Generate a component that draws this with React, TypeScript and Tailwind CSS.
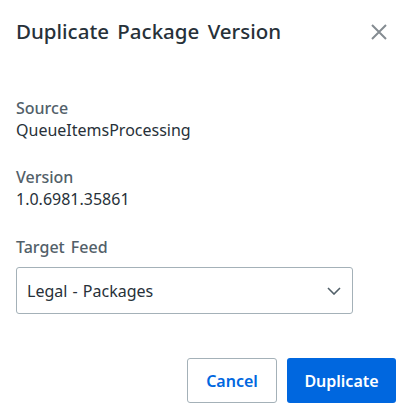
import React from "react";

export default function App() {
  return (
    <div className="w-[400px] h-[417px] bg-white flex flex-col" style={{ fontFamily: '"Noto Sans", sans-serif' }}>
      <div className="flex items-center justify-between pl-4 pr-[13px] pt-[17px] h-[46px]">
        <h1 className="text-[20.5px] font-medium text-[#273139] [word-spacing:3px]">Duplicate Package Version</h1>
        <button className="w-[16px] h-[16px] flex items-center justify-center">
          <svg width="16" height="16" viewBox="0 0 16 16" fill="none" stroke="#858c92" strokeWidth="2">
            <path d="M1 1L15 15M15 1L1 15" />
          </svg>
        </button>
      </div>
      <div className="flex flex-col px-4 pt-[51px]">
        <div className="text-[16px] leading-[22px] text-[#526069] font-medium">Source</div>
        <div className="text-[16px] leading-[22px] text-[#273139]">QueueItemsProcessing</div>
        <div className="text-[16px] leading-[22px] text-[#526069] font-medium mt-[25px]">Version</div>
        <div className="text-[16px] leading-[22px] text-[#273139]">1.0.6981.35861</div>
        <div className="text-[16px] leading-[22px] text-[#526069] font-medium mt-[26px] [word-spacing:2px]">Target Feed</div>
        <div className="mt-[9px] w-[337px] h-[47px] border border-[#a4b1b8] rounded-[3px] flex items-center justify-between pl-[10px] pr-[11px]">
          <span className="text-[16px] text-[#273139] [word-spacing:1px]">Legal - Packages</span>
          <svg width="14" height="8" viewBox="0 0 14 8" fill="none" stroke="#526069" strokeWidth="1.6">
            <path d="M1 1L7 7L13 1" />
          </svg>
        </div>
      </div>
      <div className="flex justify-end gap-[10px] pr-[4px] mt-[44px]">
        <button className="w-[90px] h-[45px] border border-[#a4b1b8] rounded-[3px] text-[#0067df] text-[16px] font-semibold">Cancel</button>
        <button className="w-[109px] h-[45px] bg-[#0067df] rounded-[3px] text-white text-[16px] font-semibold">Duplicate</button>
      </div>
    </div>
  );
}
